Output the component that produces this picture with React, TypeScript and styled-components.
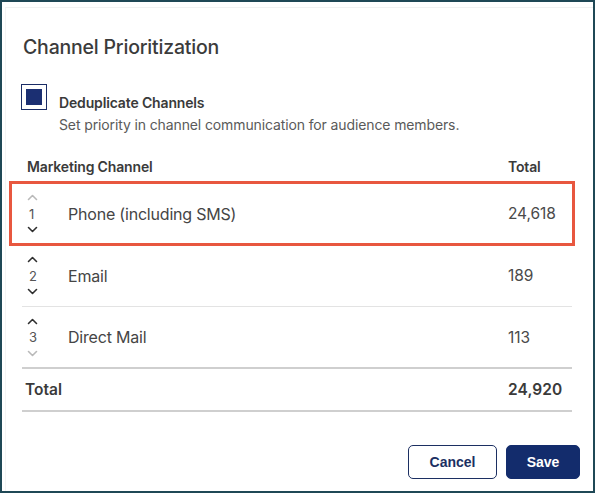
import React from "react";
import styled, { createGlobalStyle } from "styled-components";

const Global = createGlobalStyle`
  html, body { margin: 0; padding: 0; background: #ffffff; }
  * { box-sizing: border-box; }
  body { font-family: Inter, "Noto Sans", sans-serif; }
`;

const Frame = styled.div`
  width: 595px;
  height: 493px;
  border: 2px solid #1f4856;
  background: #ffffff;
  position: relative;
  overflow: hidden;
`;

const Dialog = styled.div`
  margin: 5px 0 0 3px;
  height: 484px;
  border-top: 1px solid #f1f2f2;
  border-left: 1px solid #f4f4f4;
  padding: 26px 13px 0 16px;
  display: flex;
  flex-direction: column;
`;

const Title = styled.h1`
  margin: 0;
  font-size: 19.5px;
  line-height: 26px;
  font-weight: 500;
  color: #3b3b3b;
  letter-spacing: -0.2px;
  padding-left: 1px;
`;

const CheckRow = styled.div`
  display: flex;
  align-items: flex-start;
  gap: 12px;
  margin-top: 24px;
  margin-left: -1px;
`;

const CheckBox = styled.div`
  width: 26px;
  height: 26px;
  border: 1.5px solid #1a2c66;
  display: flex;
  align-items: center;
  justify-content: center;
  flex-shrink: 0;
  &::after {
    content: "";
    width: 16px;
    height: 16px;
    background: #1b2f72;
  }
`;

const CheckText = styled.div`
  display: flex;
  flex-direction: column;
  padding-top: 10px;
`;

const CheckLabel = styled.div`
  font-size: 14px;
  line-height: 18px;
  font-weight: 600;
  color: #3a3a3a;
  letter-spacing: -0.15px;
`;

const CheckHint = styled.div`
  font-size: 14px;
  line-height: 18px;
  font-weight: 400;
  color: #5a5a5a;
  margin-top: 4px;
  letter-spacing: -0.12px;
`;

const Table = styled.div`
  margin-top: 16px;
  width: 550px;
  display: flex;
  flex-direction: column;
`;

const Row = styled.div<{ $h: number; $line: "thin" | "thick" | "none" }>`
  position: relative;
  display: grid;
  grid-template-columns: 46px 1fr 64px;
  align-items: center;
  height: ${(p) => p.$h}px;
  border-bottom: ${(p) =>
    p.$line === "thick" ? "2px solid #cfcfcf" : p.$line === "thin" ? "1px solid #e3e3e3" : "none"};
`;

const HeadCell = styled.div`
  font-size: 14px;
  font-weight: 600;
  color: #3a3a3a;
  letter-spacing: -0.15px;
`;

const HeadName = styled(HeadCell)`
  grid-column: 1 / 3;
  padding-left: 5px;
`;

const OrderCell = styled.div`
  display: flex;
  flex-direction: column;
  align-items: flex-start;
  padding-left: 5px;
`;

const ArrowBtn = styled.span<{ $disabled?: boolean }>`
  display: flex;
  width: 11px;
  height: 8px;
  align-items: center;
  justify-content: center;
  color: ${(p) => (p.$disabled ? "#b9b9b9" : "#2f2f2f")};
`;

const OrderNum = styled.div`
  font-size: 13px;
  line-height: 20px;
  color: #555555;
  padding: 2px 0 2px 2px;
`;

const NameCell = styled.div`
  font-size: 16px;
  color: #454545;
  letter-spacing: -0.2px;
`;

const ValueCell = styled.div`
  font-size: 15.5px;
  color: #4a4a4a;
  letter-spacing: -0.1px;
`;

const TotalLabel = styled.div`
  grid-column: 1 / 3;
  padding-left: 3px;
  font-size: 15.5px;
  font-weight: 600;
  color: #3a3a3a;
`;

const TotalValue = styled.div`
  font-size: 15.5px;
  font-weight: 600;
  color: #3a3a3a;
  letter-spacing: 0.1px;
`;

const Highlight = styled.div`
  position: absolute;
  left: -13px;
  right: -3px;
  top: -2px;
  bottom: -2px;
  border: 3px solid #e8573f;
  pointer-events: none;
`;

const Footer = styled.div`
  margin-top: auto;
  margin-bottom: 12px;
  display: flex;
  justify-content: flex-end;
  gap: 9px;
`;

const Button = styled.button<{ $primary?: boolean }>`
  height: 34px;
  border-radius: 5px;
  font-family: "Liberation Sans", Arial, sans-serif;
  font-size: 14px;
  font-weight: 700;
  cursor: pointer;
  border: 1px solid ${(p) => (p.$primary ? "#132c6c" : "#1c2f62")};
  background: ${(p) => (p.$primary ? "#132c6c" : "#ffffff")};
  color: ${(p) => (p.$primary ? "#ffffff" : "#1c2f62")};
  width: ${(p) => (p.$primary ? "74px" : "89px")};
`;

const Chevron = ({ dir }: { dir: "up" | "down" }) => (
  <svg width="11" height="7" viewBox="0 0 11 7" fill="none">
    <path
      d={dir === "up" ? "M1.5 5.5 L5.5 1.5 L9.5 5.5" : "M1.5 1.5 L5.5 5.5 L9.5 1.5"}
      stroke="currentColor"
      strokeWidth="1.6"
      strokeLinecap="round"
      strokeLinejoin="round"
    />
  </svg>
);

type Channel = { order: number; name: string; total: string };

const channels: Channel[] = [
  { order: 1, name: "Phone (including SMS)", total: "24,618" },
  { order: 2, name: "Email", total: "189" },
  { order: 3, name: "Direct Mail", total: "113" },
];

export default function App() {
  return (
    <>
      <Global />
      <Frame>
        <Dialog>
          <Title>Channel Prioritization</Title>
          <CheckRow>
            <CheckBox />
            <CheckText>
              <CheckLabel>Deduplicate Channels</CheckLabel>
              <CheckHint>Set priority in channel communication for audience members.</CheckHint>
            </CheckText>
          </CheckRow>
          <Table>
            <Row $h={33} $line="thin">
              <HeadName>Marketing Channel</HeadName>
              <HeadCell>Total</HeadCell>
            </Row>
            {channels.map((c, i) => (
              <Row key={c.order} $h={62} $line={i === channels.length - 1 ? "thick" : "thin"}>
                <OrderCell>
                  <ArrowBtn $disabled={i === 0}>
                    <Chevron dir="up" />
                  </ArrowBtn>
                  <OrderNum>{c.order}</OrderNum>
                  <ArrowBtn $disabled={i === channels.length - 1}>
                    <Chevron dir="down" />
                  </ArrowBtn>
                </OrderCell>
                <NameCell>{c.name}</NameCell>
                <ValueCell>{c.total}</ValueCell>
                {i === 0 && <Highlight />}
              </Row>
            ))}
            <Row $h={43} $line="thick">
              <TotalLabel>Total</TotalLabel>
              <TotalValue>24,920</TotalValue>
            </Row>
          </Table>
          <Footer>
            <Button>Cancel</Button>
            <Button $primary>Save</Button>
          </Footer>
        </Dialog>
      </Frame>
    </>
  );
}
